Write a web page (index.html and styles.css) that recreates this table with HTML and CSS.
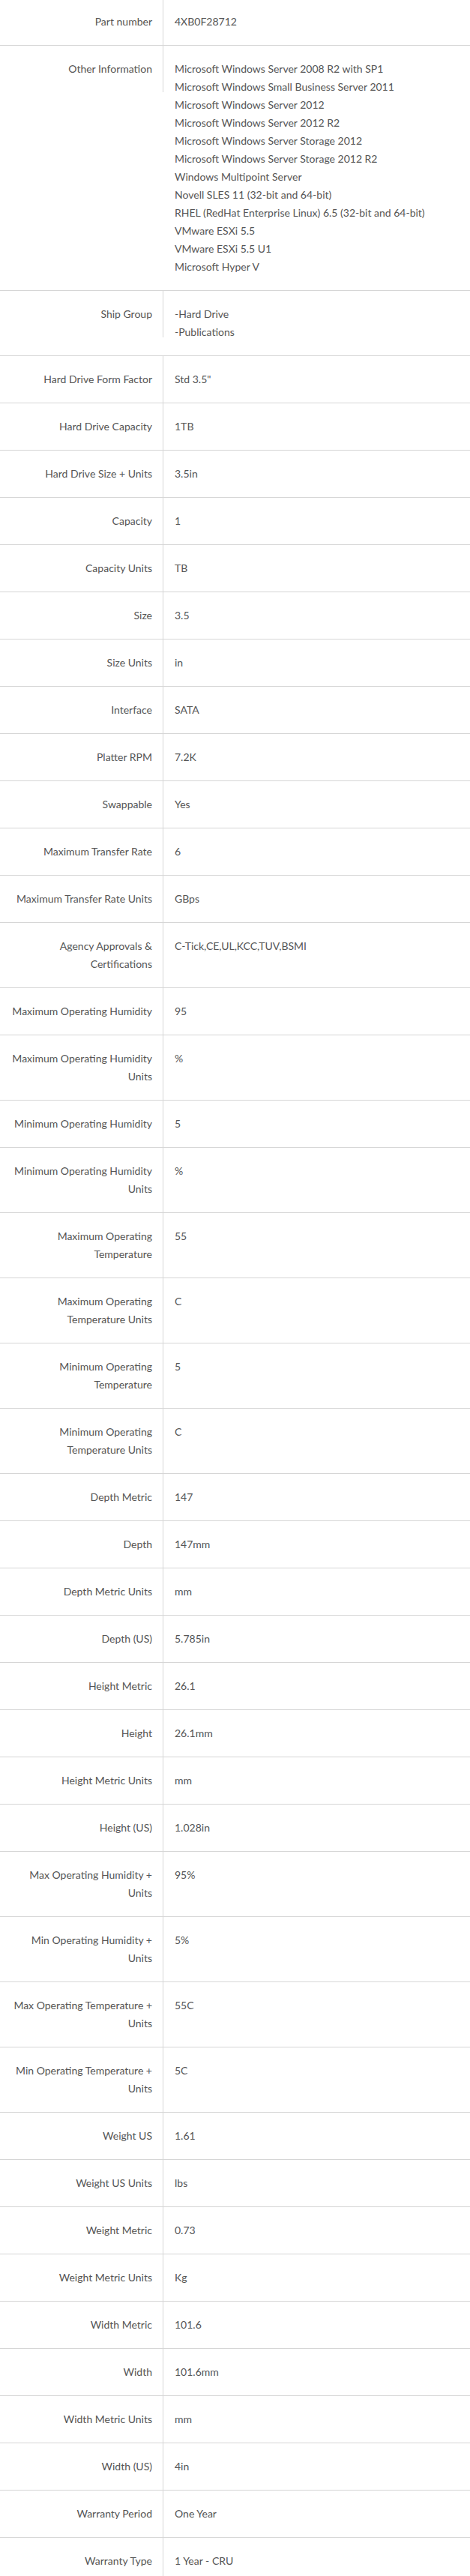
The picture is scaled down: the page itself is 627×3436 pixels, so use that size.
FILE: index.html
```html
<!DOCTYPE html>
<html lang="en">
<head>
<meta charset="utf-8">
<title>Specifications</title>
<link rel="stylesheet" href="styles.css">
</head>
<body>
<div class="specs">
  <div class="row"><div class="label">Part number</div><div class="value">4XB0F28712</div></div>
  <div class="row"><div class="label">Other Information</div><div class="value">
    <div>Microsoft Windows Server 2008 R2 with SP1</div>
    <div>Microsoft Windows Small Business Server 2011</div>
    <div>Microsoft Windows Server 2012</div>
    <div>Microsoft Windows Server 2012 R2</div>
    <div>Microsoft Windows Server Storage 2012</div>
    <div>Microsoft Windows Server Storage 2012 R2</div>
    <div>Windows Multipoint Server</div>
    <div>Novell SLES 11 (32-bit and 64-bit)</div>
    <div>RHEL (RedHat Enterprise Linux) 6.5 (32-bit and 64-bit)</div>
    <div>VMware ESXi 5.5</div>
    <div>VMware ESXi 5.5 U1</div>
    <div>Microsoft Hyper V</div>
  </div></div>
  <div class="row"><div class="label">Ship Group</div><div class="value"><div>-Hard Drive</div><div>-Publications</div></div></div>
  <div class="row"><div class="label">Hard Drive Form Factor</div><div class="value">Std 3.5"</div></div>
  <div class="row"><div class="label">Hard Drive Capacity</div><div class="value">1TB</div></div>
  <div class="row"><div class="label">Hard Drive Size + Units</div><div class="value">3.5in</div></div>
  <div class="row"><div class="label">Capacity</div><div class="value">1</div></div>
  <div class="row"><div class="label">Capacity Units</div><div class="value">TB</div></div>
  <div class="row"><div class="label">Size</div><div class="value">3.5</div></div>
  <div class="row"><div class="label">Size Units</div><div class="value">in</div></div>
  <div class="row"><div class="label">Interface</div><div class="value">SATA</div></div>
  <div class="row"><div class="label">Platter RPM</div><div class="value">7.2K</div></div>
  <div class="row"><div class="label">Swappable</div><div class="value">Yes</div></div>
  <div class="row"><div class="label">Maximum Transfer Rate</div><div class="value">6</div></div>
  <div class="row"><div class="label">Maximum Transfer Rate Units</div><div class="value">GBps</div></div>
  <div class="row"><div class="label">Agency Approvals &amp; Certifications</div><div class="value">C-Tick,CE,UL,KCC,TUV,BSMI</div></div>
  <div class="row"><div class="label">Maximum Operating Humidity</div><div class="value">95</div></div>
  <div class="row"><div class="label">Maximum Operating Humidity Units</div><div class="value">%</div></div>
  <div class="row"><div class="label">Minimum Operating Humidity</div><div class="value">5</div></div>
  <div class="row"><div class="label">Minimum Operating Humidity Units</div><div class="value">%</div></div>
  <div class="row"><div class="label">Maximum Operating Temperature</div><div class="value">55</div></div>
  <div class="row"><div class="label">Maximum Operating Temperature Units</div><div class="value">C</div></div>
  <div class="row"><div class="label">Minimum Operating Temperature</div><div class="value">5</div></div>
  <div class="row"><div class="label">Minimum Operating Temperature Units</div><div class="value">C</div></div>
  <div class="row"><div class="label">Depth Metric</div><div class="value">147</div></div>
  <div class="row"><div class="label">Depth</div><div class="value">147mm</div></div>
  <div class="row"><div class="label">Depth Metric Units</div><div class="value">mm</div></div>
  <div class="row"><div class="label">Depth (US)</div><div class="value">5.785in</div></div>
  <div class="row"><div class="label">Height Metric</div><div class="value">26.1</div></div>
  <div class="row"><div class="label">Height</div><div class="value">26.1mm</div></div>
  <div class="row"><div class="label">Height Metric Units</div><div class="value">mm</div></div>
  <div class="row"><div class="label">Height (US)</div><div class="value">1.028in</div></div>
  <div class="row"><div class="label">Max Operating Humidity + Units</div><div class="value">95%</div></div>
  <div class="row"><div class="label">Min Operating Humidity + Units</div><div class="value">5%</div></div>
  <div class="row"><div class="label">Max Operating Temperature + Units</div><div class="value">55C</div></div>
  <div class="row"><div class="label">Min Operating Temperature + Units</div><div class="value">5C</div></div>
  <div class="row"><div class="label">Weight US</div><div class="value">1.61</div></div>
  <div class="row"><div class="label">Weight US Units</div><div class="value">lbs</div></div>
  <div class="row"><div class="label">Weight Metric</div><div class="value">0.73</div></div>
  <div class="row"><div class="label">Weight Metric Units</div><div class="value">Kg</div></div>
  <div class="row"><div class="label">Width Metric</div><div class="value">101.6</div></div>
  <div class="row"><div class="label">Width</div><div class="value">101.6mm</div></div>
  <div class="row"><div class="label">Width Metric Units</div><div class="value">mm</div></div>
  <div class="row"><div class="label">Width (US)</div><div class="value">4in</div></div>
  <div class="row"><div class="label">Warranty Period</div><div class="value">One Year</div></div>
  <div class="row"><div class="label">Warranty Type</div><div class="value">1 Year - CRU</div></div>
</div>
</body>
</html>
```

FILE: styles.css
```css
html, body {
  margin: 0;
  padding: 0;
  background: #ffffff;
}

body {
  font-family: Lato, "Open Sans", "Liberation Sans", sans-serif;
  font-size: 14px;
  line-height: 24px;
  color: #555555;
}

.specs {
  margin-top: -2px;
  width: 627px;
}

.row {
  display: flex;
  align-items: flex-start;
  border-bottom: 1px solid #d6d6d6;
}

.label {
  flex: 0 0 218px;
  box-sizing: border-box;
  padding: 19px 14px 19px 15px;
  border-right: 1px solid #d6d6d6;
  text-align: right;
}

.value {
  flex: 1 1 auto;
  padding: 19px 15px;
}
```
